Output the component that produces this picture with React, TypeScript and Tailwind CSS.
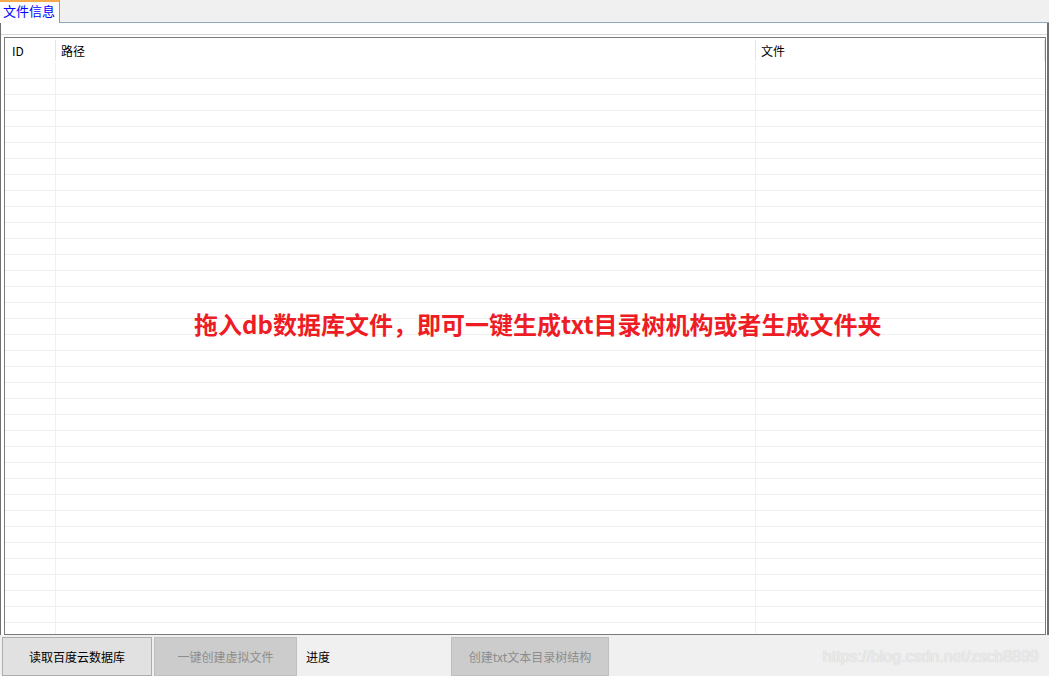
import React from "react";

const rows = Array.from({ length: 36 }, (_, i) => i);

export default function App() {
  return (
    <div
      className="w-[1049px] h-[676px] bg-[#f0f0f0] flex flex-col overflow-hidden"
      style={{ fontFamily: '"Noto Sans CJK SC", "Liberation Sans", sans-serif' }}
    >
      {/* tab strip */}
      <div className="h-[23px] flex shrink-0">
        <div className="w-[60px] h-[23px] bg-[#fcfcff] border-t-2 border-[#f5a94a] border-r border-r-[#8c9cb0] flex items-start pl-[3px]">
          <span className="text-[13px] leading-[18px] text-[#0000ff]">文件信息</span>
        </div>
        <div className="flex-1 border-b border-[#92a8bc]" />
      </div>

      {/* tab page */}
      <div className="flex-1 flex flex-col bg-white border-l border-l-[#6f6f6f] border-r-2 border-r-[#6f6f6f] relative min-h-0">
        <div className="h-[11px] shrink-0" />
        <div className="h-[1px] bg-[#d8d8d8] shrink-0" />
        <div className="h-[2px] shrink-0" />
        <div className="flex-1 ml-[3px] mr-[1px] border border-[#7a7a7a] flex flex-col overflow-hidden min-h-0">
          {/* header */}
          <div className="h-[25px] shrink-0 flex text-[12px] text-black">
            <div className="w-[51px] flex items-center pl-[7px] border-r border-[#e5e5e5] my-[2px]">ID</div>
            <div className="w-[700px] flex items-center pl-[5px] border-r border-[#e5e5e5] my-[2px]">路径</div>
            <div className="w-[289px] flex items-center pl-[5px] border-r border-[#e5e5e5] my-[2px]">文件</div>
          </div>
          {rows.map((r) => (
            <div key={r} className="h-[16px] shrink-0 flex border-b border-[#f0f0f0]">
              <div className="w-[51px] border-r border-[#f0f0f0]" />
              <div className="w-[700px] border-r border-[#f0f0f0]" />
              <div className="flex-1" />
            </div>
          ))}
        </div>

        <div className="absolute left-[193px] top-[286px] text-[24px] leading-[30px] font-bold text-[#ee1c25] whitespace-nowrap">
          拖入db数据库文件，即可一键生成txt目录树机构或者生成文件夹
        </div>
      </div>

      {/* bottom bar */}
      <div className="h-[41px] shrink-0 flex items-start pt-[2px] text-[12px] relative">
        <button className="ml-[2px] w-[150px] h-[39px] bg-[#e1e1e1] border border-[#adadad] text-black flex items-center justify-center">
          读取百度云数据库
        </button>
        <button className="ml-[2px] w-[143px] h-[39px] bg-[#cccccc] border border-[#bfbfbf] text-[#8d8d8d] flex items-center justify-center">
          一键创建虚拟文件
        </button>
        <div className="ml-[9px] h-[39px] flex items-center text-black w-[145px]">进度</div>
        <button className="w-[158px] h-[39px] bg-[#cccccc] border border-[#bfbfbf] text-[#8d8d8d] flex items-center justify-center">
          创建txt文本目录树结构
        </button>
        <div
          className="absolute right-[10px] top-[12px] text-[16px] leading-[20px] text-[#ececec]"
          style={{ fontFamily: '"Liberation Sans", Arial, sans-serif', textShadow: "0 0 1px #c0c0c0" }}
        >
          https://blog.csdn.net/zscb8899
        </div>
      </div>
    </div>
  );
}
